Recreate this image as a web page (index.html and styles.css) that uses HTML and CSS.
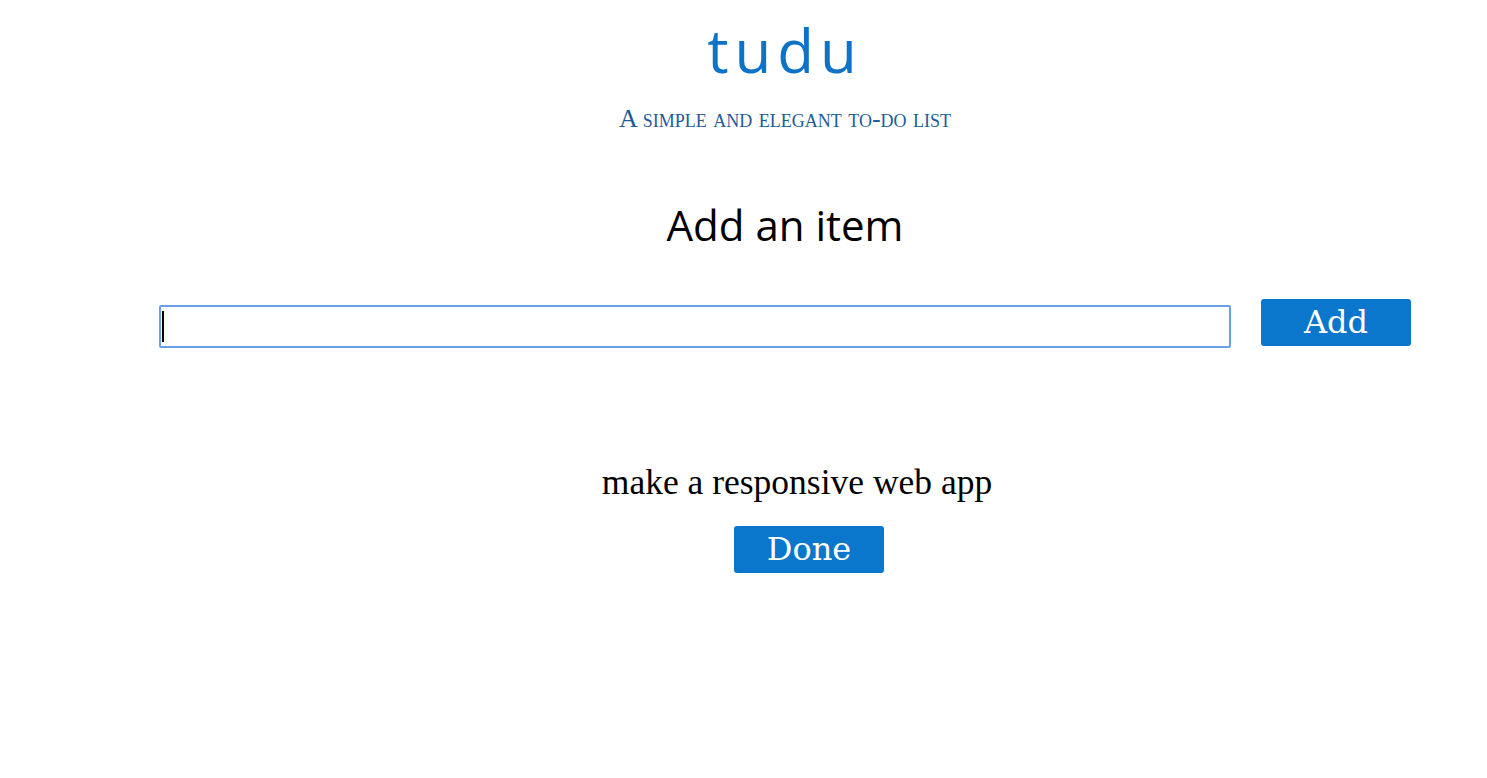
FILE: index.html
```html
<!DOCTYPE html>
<html>
<head>
<meta charset="utf-8">
<title>tudu</title>
<link rel="stylesheet" href="styles.css">
</head>
<body>
<div class="page">
  <header class="header">
    <h1 class="logo">tudu</h1>
    <p class="tagline">A simple and elegant to-do list</p>
  </header>
  <section class="add">
    <h2 class="add-title">Add an item</h2>
    <form class="add-form">
      <div class="input-wrap">
        <input class="add-input" type="text" autofocus>
        <span class="caret"></span>
      </div>
      <button class="btn add-btn" type="button">Add</button>
    </form>
  </section>
  <ul class="list">
    <li class="item">
      <span class="item-text">make a responsive web app</span>
      <button class="btn done-btn" type="button">Done</button>
    </li>
  </ul>
</div>
</body>
</html>
```

FILE: styles.css
```css
html, body {
  margin: 0;
  padding: 0;
  background: #ffffff;
}
.page {
  padding: 0 76px 0 159px;
}
.header {
  display: flex;
  flex-direction: column;
  align-items: center;
}
.logo {
  margin: 14px 0 0 0;
  font-family: "Open Sans", "Noto Sans", sans-serif;
  font-weight: 400;
  font-size: 60px;
  line-height: 72px;
  letter-spacing: 6px;
  color: #0e72c6;
}
.tagline {
  margin: 18px 0 0 0;
  font-family: "Liberation Serif", serif;
  font-variant: small-caps;
  font-size: 26px;
  line-height: 30px;
  color: #1d5c98;
}
.add {
  display: flex;
  flex-direction: column;
  align-items: center;
}
.add-title {
  margin: 65px 0 0 0;
  font-family: "Open Sans", "Noto Sans", sans-serif;
  font-weight: 400;
  font-size: 42px;
  line-height: 52px;
  color: #000;
}
.add-form {
  margin-top: 48px;
  width: 100%;
  display: flex;
  align-items: flex-start;
  gap: 30px;
}
.input-wrap {
  flex: 1;
  position: relative;
  display: flex;
  margin-top: 6px;
}
.add-input {
  flex: 1;
  box-sizing: border-box;
  height: 43px;
  border: 2px solid #6d9fe6;
  border-radius: 2px;
  outline: none;
  padding: 0 2px;
  font-size: 28px;
  font-family: "Liberation Sans", sans-serif;
  caret-color: transparent;
}
.caret {
  position: absolute;
  left: 3px;
  top: 6px;
  width: 2px;
  height: 31px;
  background: #000;
}
.btn {
  box-sizing: border-box;
  width: 150px;
  height: 47px;
  border: none;
  border-radius: 3px;
  background: #0a76cc;
  color: #fff;
  font-family: "DejaVu Serif", "Liberation Serif", serif;
  font-size: 32px;
  line-height: 47px;
  padding: 0;
  cursor: pointer;
}
.list {
  list-style: none;
  margin: 113px 0 0 0;
  padding: 0 0 0 24px;
}
.item {
  display: flex;
  flex-direction: column;
  align-items: center;
}
.item-text {
  font-family: "Liberation Serif", serif;
  font-size: 35.5px;
  line-height: 42px;
  color: #000;
}
.done-btn {
  margin-top: 23px;
  margin-left: 24px;
}
```
